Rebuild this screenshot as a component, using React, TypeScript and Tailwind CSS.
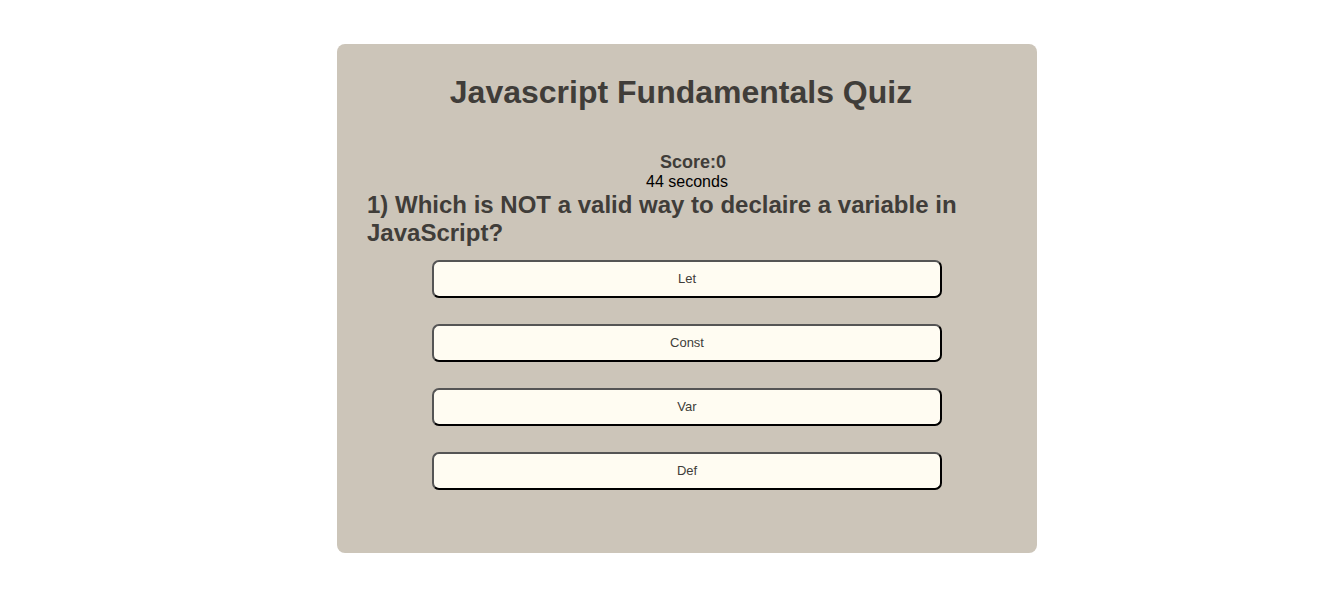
const answers = ["Let", "Const", "Var", "Def"];

export default function App() {
  return (
    <div className="min-h-screen bg-white pt-[44px] pl-[54px] font-['Liberation_Sans',Arial,sans-serif]">
      <div className="mx-auto w-[700px] rounded-lg bg-[#ccc5b9] px-[30px] pt-[30px] pb-[63px] text-[#403d39]">
        <h1 className="pr-[12px] text-center text-[32px] font-bold leading-[37px]">
          Javascript Fundamentals Quiz
        </h1>

        <div className="mt-[41px] text-center">
          <p className="pl-[12px] text-[18px] font-bold leading-[21px]">Score:0</p>
          <p className="text-[16px] leading-[18px] text-black">44 seconds</p>
        </div>

        <h2 className="text-[24px] font-bold leading-[28px]">
          1) Which is NOT a valid way to declaire a variable in JavaScript?
        </h2>

        <div className="mt-[13px] flex flex-col items-center gap-[26px]">
          {answers.map((a) => (
            <button
              key={a}
              type="button"
              className="h-[38px] w-[510px] rounded-[7px] border-2 border-t-[#555] border-l-[#555] border-b-black border-r-black bg-[#fffcf2] text-[13px] text-[#403d39]"
            >
              {a}
            </button>
          ))}
        </div>
      </div>
    </div>
  );
}
